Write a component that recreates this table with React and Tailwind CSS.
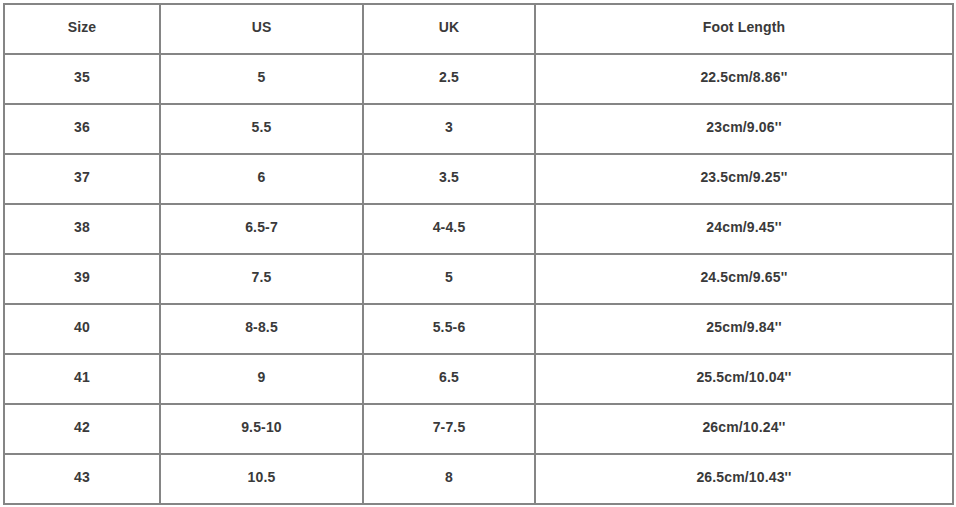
const rows = [
  ["35", "5", "2.5", "22.5cm/8.86''"],
  ["36", "5.5", "3", "23cm/9.06''"],
  ["37", "6", "3.5", "23.5cm/9.25''"],
  ["38", "6.5-7", "4-4.5", "24cm/9.45''"],
  ["39", "7.5", "5", "24.5cm/9.65''"],
  ["40", "8-8.5", "5.5-6", "25cm/9.84''"],
  ["41", "9", "6.5", "25.5cm/10.04''"],
  ["42", "9.5-10", "7-7.5", "26cm/10.24''"],
  ["43", "10.5", "8", "26.5cm/10.43''"],
];

export default function App() {
  return (
    <div className="w-[956px] h-[507px] bg-white pl-[3px] pt-[3px] font-['Liberation_Sans',Arial,sans-serif]">
      <table className="table-fixed border-collapse w-[949px] text-[14px] tracking-[0.15px] font-bold text-[#3a3a3a]">
        <colgroup>
          <col className="w-[156px]" />
          <col className="w-[203px]" />
          <col className="w-[172px]" />
          <col className="w-[418px]" />
        </colgroup>
        <thead>
          <tr className="h-[50px]">
            {["Size", "US", "UK", "Foot Length"].map((h) => (
              <th key={h} className="border-2 border-[#858585] p-0 pb-[3px] text-center font-bold">
                {h}
              </th>
            ))}
          </tr>
        </thead>
        <tbody>
          {rows.map((r) => (
            <tr key={r[0]} className="h-[50px]">
              {r.map((c, i) => (
                <td key={i} className="border-2 border-[#858585] p-0 pb-[3px] text-center">
                  {c}
                </td>
              ))}
            </tr>
          ))}
        </tbody>
      </table>
    </div>
  );
}
